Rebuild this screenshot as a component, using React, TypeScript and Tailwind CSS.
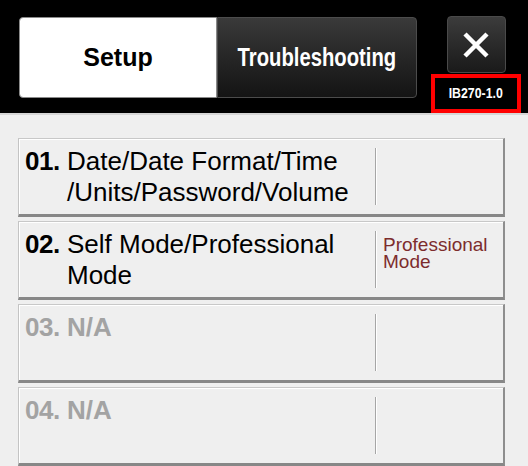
const ROWS = [
  { num: "01.", lines: ["Date/Date Format/Time", "/Units/Password/Volume"], value: "", enabled: true },
  { num: "02.", lines: ["Self Mode/Professional", "Mode"], value: "Professional\nMode", enabled: true },
  { num: "03.", lines: ["N/A"], value: "", enabled: false },
  { num: "04.", lines: ["N/A"], value: "", enabled: false },
];

export default function App() {
  return (
    <div className="h-[466px] w-[528px] overflow-hidden bg-[#efefef] font-['Liberation_Sans',Arial,sans-serif]">
      {/* header */}
      <div className="flex h-[115px] border-b-2 border-[#d6d6d6] bg-black pl-[19px] pr-[7px] pt-[17px]">
        <div className="flex h-[81px] w-[398px]">
          <div className="flex w-[198px] items-center justify-center rounded-l-[4px] border border-[#8a8a8a] bg-white text-[25px] font-bold text-black">
            Setup
          </div>
          <div className="flex w-[200px] items-center justify-center rounded-r-[4px] border border-[#4c4c4c] bg-gradient-to-b from-[#3a3a3a] to-[#141414] text-white">
            <span className="inline-block scale-x-[0.81] whitespace-nowrap text-[25px] font-bold">Troubleshooting</span>
          </div>
        </div>
        <div className="ml-auto flex w-[90px] flex-col items-center">
          <div className="-mt-[1px] flex h-[57px] w-[59px] items-center justify-center rounded-[4px] border border-[#4a4a4a] bg-gradient-to-b from-[#3c3c3c] to-[#1a1a1a]">
            <svg width="26" height="26" viewBox="0 0 26 26">
              <path d="M2 2 L24 24 M24 2 L2 24" stroke="#ffffff" strokeWidth="4.5" strokeLinecap="butt" />
            </svg>
          </div>
          <div className="mt-[1px] flex h-[39px] w-[90px] items-center justify-center border-4 border-[#ff0000]">
            <span className="inline-block scale-x-[0.88] whitespace-nowrap text-[14px] font-bold text-white">IB270-1.0</span>
          </div>
        </div>
      </div>

      {/* list */}
      <div className="flex flex-col gap-[4px] pl-[18px] pr-[23px] pt-[23px]">
        {ROWS.map((row) => {
          const tone = row.enabled ? "text-black" : "text-[#a3a3a3]";
          return (
            <div
              key={row.num}
              className="flex h-[79px] border-b-[3px] border-l border-r-2 border-t border-b-[#878787] border-l-[#c4c4c4] border-r-[#8e8e8e] border-t-[#c8c8c8] bg-[#efefef] shadow-[inset_1px_1px_0_#ffffff]"
            >
              <div className={`flex w-[356px] items-start pl-[6px] pt-[7px] text-[26px] leading-[31px] ${tone}`}>
                <span className="w-[42px] shrink-0 font-bold tracking-[-0.5px]">{row.num}</span>
                <div className={row.enabled ? "" : "font-bold"}>
                  {row.lines.map((l) => (
                    <div key={l} className="whitespace-nowrap">
                      {l}
                    </div>
                  ))}
                </div>
              </div>
              <div className="my-[9px] w-[2px] border-l border-r border-l-[#a6a6a6] border-r-white" />
              <div className="whitespace-pre pl-[6px] pt-[14px] text-[19px] leading-[17px] text-[#7d2c2c]">{row.value}</div>
            </div>
          );
        })}
      </div>
    </div>
  );
}
